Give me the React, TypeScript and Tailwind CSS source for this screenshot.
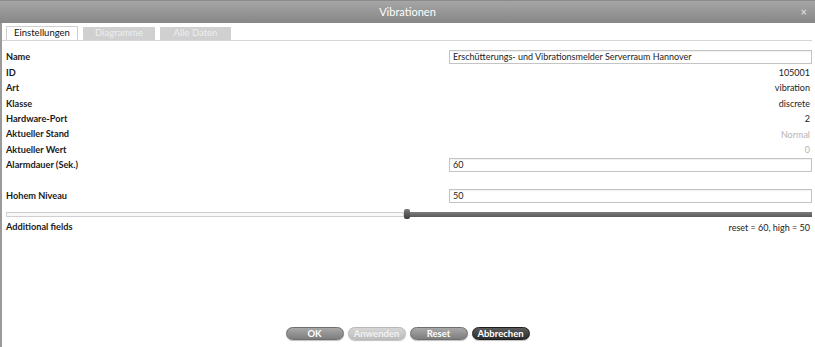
const labelClass = "text-[9.2px] font-bold text-[#1a1a1a]";
const inputClass =
  "h-[14px] w-[363px] border border-[#c4c4c4] bg-white px-[3px] text-[9px] leading-[12px] text-[#222] shadow-[inset_0_1px_1px_rgba(0,0,0,0.06)]";

const rows: { label: string; value: string; muted?: boolean }[] = [
  { label: "ID", value: "105001" },
  { label: "Art", value: "vibration" },
  { label: "Klasse", value: "discrete" },
  { label: "Hardware-Port", value: "2" },
  { label: "Aktueller Stand", value: "Normal", muted: true },
  { label: "Aktueller Wert", value: "0", muted: true },
];

function Pill({
  children,
  tone,
}: {
  children: React.ReactNode;
  tone: "normal" | "disabled" | "dark";
}) {
  const toneClass =
    tone === "dark"
      ? "border-[#1e1e1e] bg-gradient-to-b from-[#5c5c5c] to-[#2c2c2c] text-white"
      : tone === "disabled"
        ? "border-[#b8b8b8] bg-gradient-to-b from-[#d6d6d6] to-[#bdbdbd] text-[#f2f2f2]"
        : "border-[#6e6e6e] bg-gradient-to-b from-[#a8a8a8] to-[#7e7e7e] text-white";
  return (
    <button
      className={`flex h-[13px] w-[58px] items-center justify-center rounded-full border text-[9.5px] font-bold leading-none shadow-[0_1px_1px_rgba(0,0,0,0.25)] ${toneClass}`}
    >
      {children}
    </button>
  );
}

export default function App() {
  return (
    <div
      className="flex h-[347px] w-[815px] flex-col overflow-hidden bg-white"
      style={{ fontFamily: "Lato, 'Open Sans', sans-serif" }}
    >
      {/* title bar */}
      <div className="relative flex h-[23px] shrink-0 items-center justify-center border-t border-[#8a8a8a] bg-gradient-to-b from-[#a6a6a6] to-[#878787]">
        <span className="text-[11px] text-white">Vibrationen</span>
        <span className="absolute right-[8px] top-[5px] text-[11px] leading-none text-[#e6e6e6]">
          ×
        </span>
      </div>

      <div className="flex flex-1 flex-col border-l-2 border-[#9a9a9a]">
        {/* tabs */}
        <div className="mr-[3px] mt-[4px] flex h-[14px] items-end gap-[5px] border-b border-[#d6d6d6] pl-[4px]">
          <div className="flex h-[14px] w-[72px] items-center justify-center border border-b-0 border-[#cfcfcf] bg-white text-[9.5px] text-[#111]">
            Einstellungen
          </div>
          <div className="flex h-[13px] w-[72px] items-center justify-center bg-[#d0d0d0] text-[9.5px] text-[#eeeeee]">
            Diagramme
          </div>
          <div className="flex h-[13px] w-[71px] items-center justify-center bg-[#d0d0d0] text-[9.5px] text-[#eeeeee]">
            Alle Daten
          </div>
        </div>

        {/* form */}
        <div className="mt-[8px] flex flex-col pl-[4px] pr-[3px]">
          <div className="flex h-[16px] items-center justify-between">
            <span className={labelClass}>Name</span>
            <div className={inputClass}>
              Erschütterungs- und Vibrationsmelder Serverraum Hannover
            </div>
          </div>
          {rows.map((r) => (
            <div
              key={r.label}
              className="flex h-[15.4px] items-center justify-between"
            >
              <span className={labelClass}>{r.label}</span>
              <span
                className={`pr-[2px] text-[9px] ${r.muted ? "text-[#b4b4b4]" : "text-[#222]"}`}
              >
                {r.value}
              </span>
            </div>
          ))}
          <div className="flex h-[16px] items-center justify-between">
            <span className={labelClass}>Alarmdauer (Sek.)</span>
            <div className={inputClass}>60</div>
          </div>

          <div className="mt-[15px] flex h-[16px] items-center justify-between">
            <span className={labelClass}>Hohem Niveau</span>
            <div className={inputClass}>50</div>
          </div>

          {/* slider */}
          <div className="mt-[5px] flex h-[10px] items-center">
            <div className="h-[5px] w-[398px] border border-[#cfcfcf] bg-[#f8f8f8]" />
            <div className="h-[10px] w-[6px] rounded-[2px] bg-gradient-to-b from-[#7a7a7a] to-[#3e3e3e]" />
            <div className="h-[5px] flex-1 bg-gradient-to-b from-[#7c7c7c] to-[#5a5a5a]" />
          </div>

          <div className="mt-[1px] flex h-[14px] items-center justify-between">
            <span className={labelClass}>Additional fields</span>
            <span className="pr-[2px] text-[9px] text-[#222]">
              reset = 60, high = 50
            </span>
          </div>
        </div>

        {/* buttons */}
        <div className="mt-auto mb-[7px] flex justify-center gap-[4px] pr-[2px]">
          <Pill tone="normal">OK</Pill>
          <Pill tone="disabled">Anwenden</Pill>
          <Pill tone="normal">Reset</Pill>
          <Pill tone="dark">Abbrechen</Pill>
        </div>
      </div>
    </div>
  );
}
